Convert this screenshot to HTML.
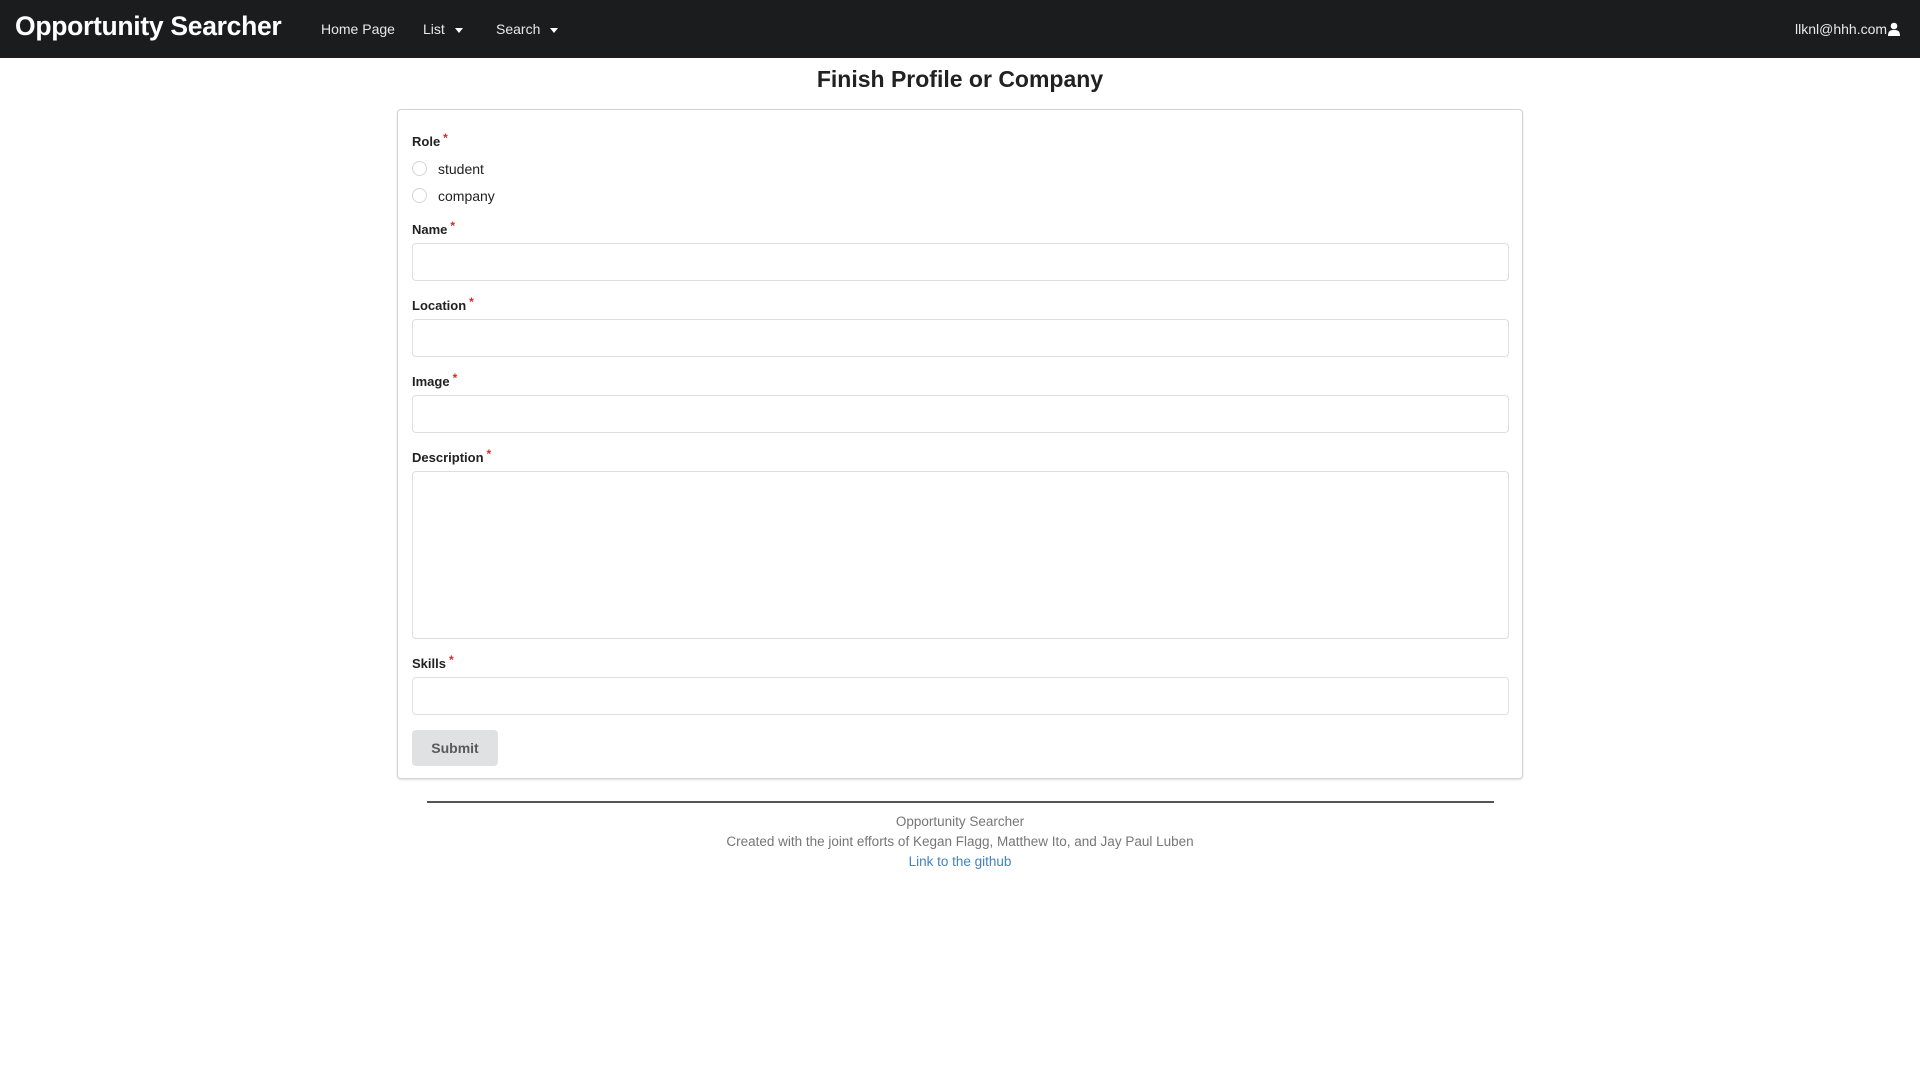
<!DOCTYPE html>
<html><head><style>
*{box-sizing:border-box}
body{margin:0;font-family:"Liberation Sans",sans-serif;background:#fff;color:#212121;font-size:14px}
.nav{height:58px;background:#1b1c1d;position:relative;color:#fff}
.brand{position:absolute;left:15px;top:11px;font-size:26.5px;font-weight:bold;letter-spacing:-0.3px}
.ni{position:absolute;top:21px;font-size:14px;color:rgba(255,255,255,.9)}
.caret{display:inline-block;width:0;height:0;border-left:4px solid transparent;border-right:4px solid transparent;border-top:5px solid #fff;vertical-align:middle;margin-left:10px}
h1{position:absolute;top:66px;left:0;width:1920px;text-align:center;font-size:23px;margin:0;font-weight:bold;color:#212121}
.card{position:absolute;left:397px;top:109px;width:1126px;height:670px;border:1px solid #d4d4d5;border-radius:4px;box-shadow:0 1px 2px rgba(34,36,38,.15)}
.lab{position:absolute;left:14px;font-size:13px;font-weight:bold}
.lab:after{content:"*";color:#db2828;margin-left:3px;position:relative;top:-4px;font-size:12px}
.inp{position:absolute;left:14px;width:1097px;height:38px;border:1px solid rgba(34,36,38,.15);border-radius:4px}
.radio{position:absolute;left:14px;width:15px;height:15px;border:1px solid #d4d4d5;border-radius:50%}
.rl{position:absolute;left:40px;font-size:14px}
.btn{position:absolute;left:14px;top:620px;width:86px;height:36px;background:#e0e1e2;border-radius:4px;color:#5a5a5a;font-weight:bold;font-size:14px;text-align:center;line-height:36px}
.hr{position:absolute;left:427px;top:801px;width:1067px;height:2px;background:#555}
.ft{position:absolute;left:0;width:1920px;text-align:center;font-size:13.5px;color:#767676}
</style></head><body>
<div class="nav">
<div class="brand">Opportunity Searcher</div>
<div class="ni" style="left:321px">Home Page</div>
<div class="ni" style="left:423px">List<span class="caret"></span></div>
<div class="ni" style="left:496px">Search<span class="caret"></span></div>
<div class="ni" style="left:1795px">llknl@hhh.com<svg width="14" height="14" viewBox="0 0 14 14" style="vertical-align:-2px"><circle cx="7" cy="4" r="3.3" fill="#fff"/><path d="M1 14 C1 9 3 8 7 8 C11 8 13 9 13 14Z" fill="#fff"/></svg></div>
</div>
<h1>Finish Profile or Company</h1>
<div class="card">
<div class="lab" style="top:24px">Role</div>
<div class="radio" style="top:51px"></div><div class="rl" style="top:51px">student</div>
<div class="radio" style="top:78px"></div><div class="rl" style="top:78px">company</div>
<div class="lab" style="top:112px">Name</div>
<div class="inp" style="top:133px"></div>
<div class="lab" style="top:188px">Location</div>
<div class="inp" style="top:209px"></div>
<div class="lab" style="top:264px">Image</div>
<div class="inp" style="top:285px"></div>
<div class="lab" style="top:340px">Description</div>
<div class="inp" style="top:361px;height:168px"></div>
<div class="lab" style="top:546px">Skills</div>
<div class="inp" style="top:567px"></div>
<div class="btn">Submit</div>
</div>
<div class="hr"></div>
<div class="ft" style="top:814px">Opportunity Searcher</div>
<div class="ft" style="top:834px">Created with the joint efforts of Kegan Flagg, Matthew Ito, and Jay Paul Luben</div>
<div class="ft" style="top:854px;color:#4183c4">Link to the github</div>
</body></html>
